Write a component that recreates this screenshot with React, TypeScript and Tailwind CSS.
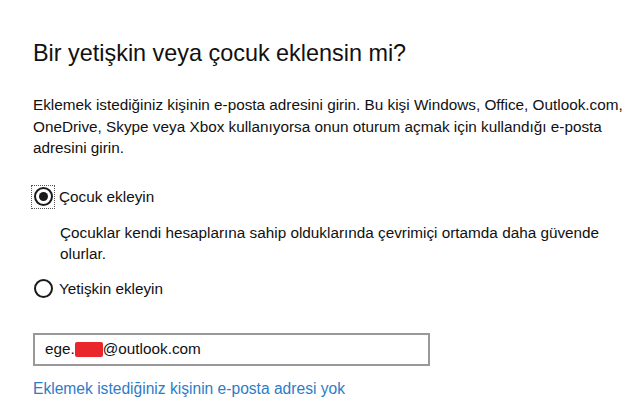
import React from 'react';

const Radio = ({ checked, focused }: { checked: boolean; focused?: boolean }) => (
    <span className={`flex items-center justify-center w-[22px] h-[22px] ${focused ? 'outline outline-1 outline-dotted outline-[#555]' : ''}`}>
        <span className="flex items-center justify-center w-[19px] h-[19px] rounded-full border-2 border-[#1a1a1a]">
            {checked && <span className="w-[9px] h-[9px] rounded-full bg-[#1a1a1a]" />}
        </span>
    </span>
);

export default function App() {
    return (
        <div className="w-[637px] h-[415px] bg-white overflow-hidden pl-[33px] pr-2 pt-[36px] text-[#111] whitespace-nowrap font-['Segoe_UI','Liberation_Sans',sans-serif]">
            <h1 className="text-[23.4px] leading-[34px]">Bir yetişkin veya çocuk eklensin mi?</h1>

            <p className="mt-[24px] text-[15.3px] leading-[21.5px]">
                Eklemek istediğiniz kişinin e-posta adresini girin. Bu kişi Windows, Office, Outlook.com,
                <br />
                OneDrive, Skype veya Xbox kullanıyorsa onun oturum açmak için kullandığı e-posta
                <br />
                adresini girin.
            </p>

            <div className="mt-[27px] flex items-center gap-[5px] -ml-[1px]">
                <Radio checked focused />
                <span className="text-[15.3px] leading-[22px]">Çocuk ekleyin</span>
            </div>

            <p className="mt-[14px] ml-[27px] text-[15.3px] leading-[21.5px]">
                Çocuklar kendi hesaplarına sahip olduklarında çevrimiçi ortamda daha güvende
                <br />
                olurlar.
            </p>

            <div className="mt-[13px] flex items-center gap-[5px] -ml-[1px]">
                <Radio checked={false} />
                <span className="text-[15.3px] leading-[22px]">Yetişkin ekleyin</span>
            </div>

            <div className="mt-[33px] w-[397px] h-[33px] border-2 border-[#999] flex items-center pl-[10px] text-[15.3px]">
                <span>ege.</span>
                <span className="inline-block w-[28px] h-[15px] bg-[#e8262b] rounded-[2px]" />
                <span>@outlook.com</span>
            </div>

            <a className="block mt-[12px] text-[15.6px] leading-[21px] text-[#2d7cc6]">
                Eklemek istediğiniz kişinin e-posta adresi yok
            </a>
        </div>
    );
}
